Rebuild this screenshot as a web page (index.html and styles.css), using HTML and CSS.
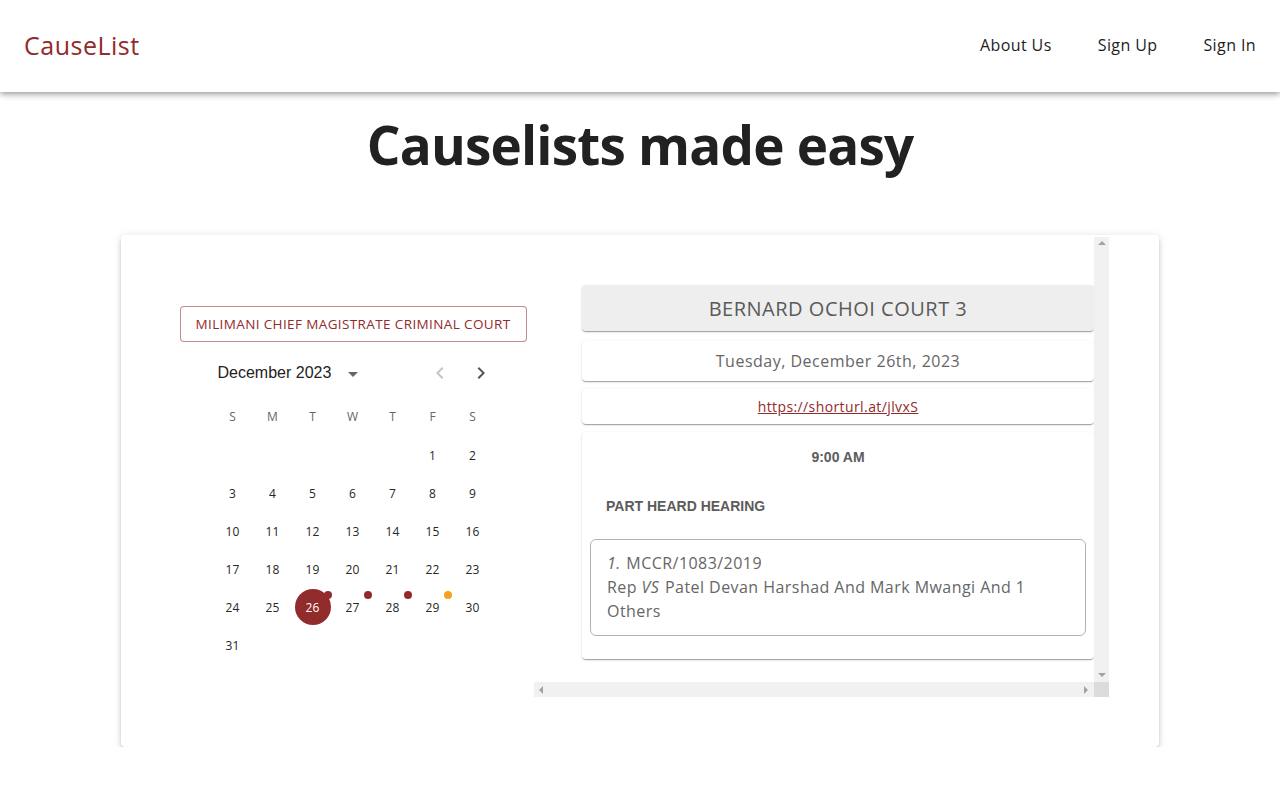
FILE: index.html
```html
<!DOCTYPE html>
<html lang="en">
<head>
<meta charset="utf-8">
<title>CauseList</title>
<link rel="stylesheet" href="styles.css">
</head>
<body>
<header class="appbar">
  <div class="logo">CauseList</div>
  <nav class="nav">
    <a class="nav-link">About Us</a>
    <a class="nav-link">Sign Up</a>
    <a class="nav-link">Sign In</a>
  </nav>
</header>

<main class="main">
  <h1 class="headline">Causelists made easy</h1>

  <section class="card">
    <div class="left-col">
      <button class="court-btn">MILIMANI CHIEF MAGISTRATE CRIMINAL COURT</button>

      <div class="calendar">
        <div class="cal-header">
          <span class="cal-label">December 2023</span>
          <svg class="caret" viewBox="0 0 24 24" width="24" height="24"><path d="M7 10l5 5 5-5z"/></svg>
          <span class="cal-nav">
            <svg class="chev chev-disabled" viewBox="0 0 24 24" width="24" height="24"><path d="M15.41 7.41 14 6l-6 6 6 6 1.41-1.41L10.83 12z"/></svg>
            <svg class="chev" viewBox="0 0 24 24" width="24" height="24"><path d="M10 6 8.59 7.41 13.17 12l-4.58 4.59L10 18l6-6z"/></svg>
          </span>
        </div>
        <div class="cal-grid">
          <span class="wd">S</span><span class="wd">M</span><span class="wd">T</span><span class="wd">W</span><span class="wd">T</span><span class="wd">F</span><span class="wd">S</span>

          <span class="day empty"></span><span class="day empty"></span><span class="day empty"></span><span class="day empty"></span><span class="day empty"></span>
          <span class="day"><span class="num">1</span></span>
          <span class="day"><span class="num">2</span></span>

          <span class="day"><span class="num">3</span></span>
          <span class="day"><span class="num">4</span></span>
          <span class="day"><span class="num">5</span></span>
          <span class="day"><span class="num">6</span></span>
          <span class="day"><span class="num">7</span></span>
          <span class="day"><span class="num">8</span></span>
          <span class="day"><span class="num">9</span></span>

          <span class="day"><span class="num">10</span></span>
          <span class="day"><span class="num">11</span></span>
          <span class="day"><span class="num">12</span></span>
          <span class="day"><span class="num">13</span></span>
          <span class="day"><span class="num">14</span></span>
          <span class="day"><span class="num">15</span></span>
          <span class="day"><span class="num">16</span></span>

          <span class="day"><span class="num">17</span></span>
          <span class="day"><span class="num">18</span></span>
          <span class="day"><span class="num">19</span></span>
          <span class="day"><span class="num">20</span></span>
          <span class="day"><span class="num">21</span></span>
          <span class="day"><span class="num">22</span></span>
          <span class="day"><span class="num">23</span></span>

          <span class="day"><span class="num">24</span></span>
          <span class="day"><span class="num">25</span></span>
          <span class="day"><span class="num selected">26</span><span class="dot"></span></span>
          <span class="day"><span class="num">27</span><span class="dot"></span></span>
          <span class="day"><span class="num">28</span><span class="dot"></span></span>
          <span class="day"><span class="num">29</span><span class="dot dot-orange"></span></span>
          <span class="day"><span class="num">30</span></span>

          <span class="day"><span class="num">31</span></span>
        </div>
      </div>
    </div>

    <div class="right-col">
      <div class="scroll-view">
        <div class="panel court-title">BERNARD OCHOI COURT 3</div>
        <div class="panel date-panel">Tuesday, December 26th, 2023</div>
        <div class="panel link-panel"><a class="link">https://shorturl.at/jlvxS</a></div>
        <div class="panel hearing">
          <div class="time">9:00 AM</div>
          <div class="hearing-type">PART HEARD HEARING</div>
          <div class="case">
            <div><em>1.</em> MCCR/1083/2019</div>
            <div>Rep <em>VS</em> Patel Devan Harshad And Mark Mwangi And 1<br>Others</div>
          </div>
        </div>
      </div>
      <div class="vbar">
        <span class="arr arr-up"></span>
        <span class="arr arr-down"></span>
      </div>
      <div class="hbar">
        <span class="arr arr-left"></span>
        <span class="arr arr-right"></span>
      </div>
      <div class="corner"></div>
    </div>
  </section>
</main>
</body>
</html>
```

FILE: styles.css
```css
* { box-sizing: border-box; }

body {
  margin: 0;
  background: #fff;
  font-family: "Open Sans", "Noto Sans", sans-serif;
  color: #222;
}

.appbar {
  height: 92px;
  display: flex;
  align-items: center;
  justify-content: space-between;
  padding: 0 24px;
  background: #fff;
  box-shadow: 0 2px 4px -1px rgba(0,0,0,0.2), 0 4px 5px 0 rgba(0,0,0,0.14), 0 1px 10px 0 rgba(0,0,0,0.12);
  position: relative;
  z-index: 2;
}

.logo {
  font-size: 25px;
  color: #922b2b;
  letter-spacing: 0.5px;
  margin-top: -2px;
}

.nav {
  display: flex;
  gap: 46px;
  margin-top: -2px;
}

.nav-link {
  font-size: 16px;
  color: #1d1d1d;
  letter-spacing: 0.4px;
  cursor: pointer;
}

.main {
  display: flex;
  flex-direction: column;
  align-items: center;
}

.headline {
  margin: 16px 0 0;
  height: 127px;
  font-size: 53px;
  line-height: 74px;
  font-weight: 700;
  color: #212121;
  letter-spacing: -0.8px;
}

.card {
  width: 1038px;
  height: 512px;
  background: #fff;
  border-radius: 4px;
  box-shadow: 0 3px 3px -2px rgba(0,0,0,0.2), 0 3px 4px 0 rgba(0,0,0,0.14), 0 1px 8px 0 rgba(0,0,0,0.12);
  padding: 2px 50px 50px;
  display: flex;
}

.left-col {
  width: 363px;
  padding-top: 69px;
  display: flex;
  flex-direction: column;
  align-items: center;
}

.court-btn {
  width: 347px;
  height: 36px;
  margin-left: 1px;
  border: 1px solid rgba(146,43,43,0.55);
  border-radius: 4px;
  background: #fff;
  color: #922b2b;
  font-family: "Open Sans", sans-serif;
  font-size: 13.5px;
  font-weight: 500;
  letter-spacing: 0.38px;
  padding: 0;
}

.calendar {
  width: 320px;
  margin-top: 14px;
}

.cal-header {
  height: 32px;
  display: flex;
  align-items: center;
  padding-left: 25px;
  padding-right: 20px;
}

.cal-label {
  font-family: "Liberation Sans", Arial, sans-serif;
  font-size: 16px;
  color: #222;
  margin-top: 1px;
}

.caret {
  fill: #666;
  margin-left: 10px;
  margin-top: 3px;
}

.cal-nav {
  margin-left: auto;
  display: flex;
  gap: 17px;
  margin-top: 2px;
}

.chev { fill: #555; }
.chev-disabled { fill: #c4c4c4; }

.cal-grid {
  margin-top: 8px;
  padding: 0 20px;
  display: grid;
  grid-template-columns: repeat(7, 40px);
  grid-auto-rows: 38px;
  grid-template-rows: 40px;
}

.wd {
  display: flex;
  align-items: center;
  justify-content: center;
  font-size: 12px;
  color: #666;
}

.day {
  position: relative;
  display: flex;
  align-items: center;
  justify-content: center;
}

.num {
  width: 36px;
  height: 36px;
  border-radius: 50%;
  display: flex;
  align-items: center;
  justify-content: center;
  font-size: 12px;
  color: #262626;
  letter-spacing: 0.2px;
}

.num.selected {
  background: #922b2b;
  color: #fff;
  font-weight: 500;
}

.dot {
  position: absolute;
  left: 31px;
  top: 3px;
  width: 8px;
  height: 8px;
  border-radius: 50%;
  background: #922b2b;
}

.dot-orange { background: #f5a21e; }

.right-col {
  width: 575px;
  height: 460px;
  display: grid;
  grid-template-columns: 560px 15px;
  grid-template-rows: 445px 15px;
}

.scroll-view {
  padding: 48px 0 0 48px;
  display: flex;
  flex-direction: column;
  gap: 8px;
}

.panel {
  background: #fff;
  border-radius: 4px;
  box-shadow: 0 2px 1px -1px rgba(0,0,0,0.2), 0 1px 1px 0 rgba(0,0,0,0.14), 0 1px 3px 0 rgba(0,0,0,0.12);
}

.court-title {
  height: 46px;
  background: #eeeeee;
  display: flex;
  align-items: center;
  justify-content: center;
  font-size: 20px;
  color: #5a5a5a;
  letter-spacing: 0.5px;
  margin-bottom: 2px;
}

.date-panel {
  height: 40px;
  display: flex;
  align-items: center;
  justify-content: center;
  font-size: 16px;
  color: #666;
  letter-spacing: 0.5px;
}

.link-panel {
  height: 35px;
  display: flex;
  align-items: center;
  justify-content: center;
}

.link {
  font-size: 14px;
  color: #922b2b;
  text-decoration: underline;
  letter-spacing: 0.4px;
  cursor: pointer;
}

.hearing {
  height: 227px;
  padding: 0 8px;
}

.time {
  font-family: "Liberation Sans", Arial, sans-serif;
  font-weight: 700;
  font-size: 14px;
  color: #5c5c5c;
  text-align: center;
  padding-top: 17px;
  line-height: 16px;
}

.hearing-type {
  font-family: "Liberation Sans", Arial, sans-serif;
  font-weight: 700;
  font-size: 14px;
  color: #5c5c5c;
  line-height: 16px;
  margin-top: 33px;
  padding-left: 16px;
}

.case {
  margin-top: 25px;
  height: 97px;
  border: 1px solid #b3b3b3;
  border-radius: 6px;
  padding: 11px 16px 0 16px;
  font-size: 16px;
  line-height: 24px;
  color: #666;
  letter-spacing: 0.45px;
}

.case em {
  font-style: italic;
  padding-right: 1px;
}

.vbar {
  background: #f1f1f1;
  display: flex;
  flex-direction: column;
  align-items: center;
  justify-content: space-between;
  padding: 4px 0 5px;
}

.hbar {
  background: #f1f1f1;
  display: flex;
  align-items: center;
  justify-content: space-between;
  padding: 0 6px 0 5px;
}

.corner { background: #dcdcdc; }

.arr {
  width: 0;
  height: 0;
  border-style: solid;
}

.arr-up { border-width: 0 4px 4px 4px; border-color: transparent transparent #a3a3a3 transparent; }
.arr-down { border-width: 4px 4px 0 4px; border-color: #a3a3a3 transparent transparent transparent; }
.arr-left { border-width: 4px 4px 4px 0; border-color: transparent #a3a3a3 transparent transparent; }
.arr-right { border-width: 4px 0 4px 4px; border-color: transparent transparent transparent #a3a3a3; }
```
